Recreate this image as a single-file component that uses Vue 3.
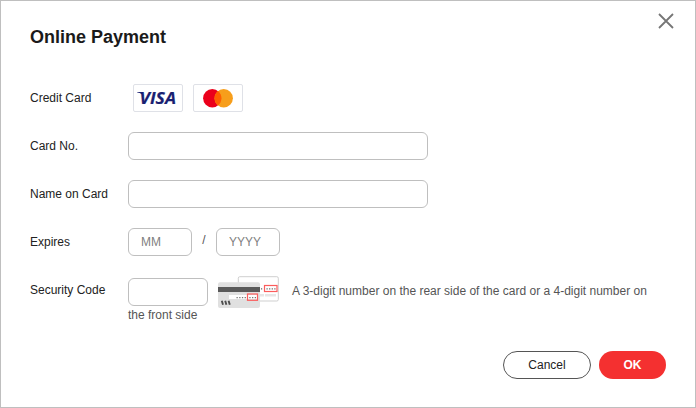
<script setup>
import { ref } from 'vue'

const cardNo = ref('')
const cardName = ref('')
const month = ref('')
const year = ref('')
const code = ref('')
</script>

<template>
  <form class="dialog" @submit.prevent>
    <header class="head">
      <h1>Online Payment</h1>
      <button type="button" class="close" aria-label="Close">
        <svg width="16" height="16" viewBox="0 0 16 16"><path d="M1 1L15 15M15 1L1 15" stroke="#767676" stroke-width="1.8" fill="none" /></svg>
      </button>
    </header>

    <div class="rows">
      <div class="row">
        <span class="label">Credit Card</span>
        <div class="brands">
          <span class="brand">
            <svg width="48" height="26" viewBox="0 0 48 26">
              <path d="M3.2 7H8.2L9.6 11L7.8 9.3Q6 7.9 3.2 7.6Z" fill="#1a1f71" />
              <text x="5.6" y="19.1" textLength="36.4" lengthAdjust="spacingAndGlyphs" class="visa">VISA</text>
            </svg>
          </span>
          <span class="brand">
            <svg width="48" height="26" viewBox="0 0 48 26">
              <circle cx="18.3" cy="13.3" r="9.2" fill="#eb001b" />
              <circle cx="29.7" cy="13.3" r="9.2" fill="#f79e1b" />
              <path d="M24 6.1A9.2 9.2 0 0 1 24 20.5A9.2 9.2 0 0 1 24 6.1Z" fill="#ff5f00" />
            </svg>
          </span>
        </div>
      </div>

      <div class="row">
        <label class="label" for="card-no">Card No.</label>
        <input id="card-no" v-model="cardNo" class="wide" />
      </div>

      <div class="row">
        <label class="label" for="card-name">Name on Card</label>
        <input id="card-name" v-model="cardName" class="wide" />
      </div>

      <div class="row">
        <label class="label" for="month">Expires</label>
        <input id="month" v-model="month" class="date" placeholder="MM" />
        <span class="slash">/</span>
        <input v-model="year" class="date" placeholder="YYYY" />
      </div>

      <div class="row security">
        <label class="label" for="code">Security Code</label>
        <div class="field">
          <div class="line">
            <input id="code" v-model="code" class="code" />
            <svg class="cards" width="62" height="32" viewBox="0 0 62 32">
              <rect x="20.3" y=".7" width="40" height="24.3" rx="1.5" fill="#fff" stroke="#cfcfcf" />
              <rect x="42" y="18" width="4" height="2.5" fill="#e6e6e6" />
              <rect x="47" y="18" width="11" height="2.5" fill="#e6e6e6" />
              <path d="M43 12.8H44.2M48.5 12.8H57.5" stroke="#666" stroke-width="1.2" stroke-dasharray="1.2 1.4" />
              <rect x="46.5" y="9.5" width="12.5" height="6" fill="none" stroke="#fb5c5c" stroke-width="1.2" />
              <rect x="0" y="6.2" width="42" height="25.8" rx="2" fill="#e0e0e0" />
              <rect x="0" y="11" width="42" height="5" fill="#5a5a5a" />
              <rect x="11" y="19" width="29" height="4" fill="#fff" />
              <path d="M18.5 21.7H28M31.3 21.7H38.5" stroke="#777" stroke-width="1.3" stroke-dasharray="1.3 1.4" />
              <rect x="29.5" y="18" width="10" height="6.3" fill="none" stroke="#fb5c5c" stroke-width="1.2" />
              <path d="M3.8 24.8L5 28.8M7.2 24.8L8.4 28.8M10.6 24.8L11.8 28.8" stroke="#4d4d4d" stroke-width="1.9" />
            </svg>
            <span>A 3-digit number on the rear side of the card or a 4-digit number on</span>
          </div>
          <div class="more">the front side</div>
        </div>
      </div>
    </div>

    <footer class="actions">
      <button type="button" class="btn cancel">Cancel</button>
      <button type="submit" class="btn ok">OK</button>
    </footer>
  </form>
</template>

<style>
body {
  background: #fff;
}
</style>

<style scoped>
.dialog {
  box-sizing: border-box;
  width: 696px;
  height: 408px;
  padding: 0 29px;
  border: 1px solid #bfbfbf;
  background: #fff;
  color: #222;
  font: 12px/18px "Liberation Sans", Arial, sans-serif;
  overflow: hidden;
}
.head {
  display: flex;
  justify-content: space-between;
  height: 83px;
}
h1 {
  margin: 24px 0 0;
  font-size: 18px;
  line-height: 24px;
  font-weight: 700;
  color: #1a1a1a;
}
.close {
  align-self: flex-start;
  display: block;
  height: 16px;
  margin: 12px -8px 0 0;
  padding: 0;
  border: 0;
  background: none;
}
.close svg {
  display: block;
}
.rows {
  display: flex;
  flex-direction: column;
  gap: 20px;
}
.row {
  display: flex;
  height: 28px;
}
.label {
  flex: 0 0 98px;
  line-height: 28px;
}
.brands {
  display: flex;
  gap: 10px;
  margin-left: 5px;
}
.brand {
  display: block;
  box-sizing: border-box;
  width: 50px;
  height: 28px;
  border: 1px solid #dfe1e7;
  border-radius: 2px;
}
.brand svg {
  display: block;
}
.visa {
  fill: #1a1f71;
  font: italic 700 16.8px "Open Sans", sans-serif;
  stroke: #1a1f71;
  stroke-width: 0.2px;
}
input {
  box-sizing: border-box;
  height: 28px;
  margin: 0;
  padding: 0 12px;
  border: 1px solid #bfbfbf;
  border-radius: 6px;
  background: #fff;
  color: #222;
  font: 12px "Liberation Sans", Arial, sans-serif;
  outline: none;
}
input::placeholder {
  color: #808080;
  opacity: 1;
}
.wide {
  width: 300px;
}
.date {
  width: 64px;
}
.slash {
  width: 24px;
  text-align: center;
  line-height: 25px;
  color: #555;
}
.security {
  height: 50px;
}
.field {
  color: #555;
}
.line {
  display: flex;
  line-height: 30px;
}
.code {
  width: 80px;
  margin-top: 2px;
}
.cards {
  display: block;
  margin: 0 12px 0 10px;
}
.more {
  line-height: 16px;
  margin-top: -1px;
}
.actions {
  display: flex;
  justify-content: flex-end;
  gap: 8px;
  margin-top: 25px;
}
.btn {
  box-sizing: border-box;
  height: 28px;
  padding: 0;
  border-radius: 14px;
  font: 12px "Liberation Sans", Arial, sans-serif;
}
.cancel {
  width: 88px;
  border: 1px solid #555;
  background: #fff;
  color: #222;
}
.ok {
  width: 67px;
  border: 0;
  background: #f43030;
  color: #fff;
  font-weight: 700;
}
</style>
